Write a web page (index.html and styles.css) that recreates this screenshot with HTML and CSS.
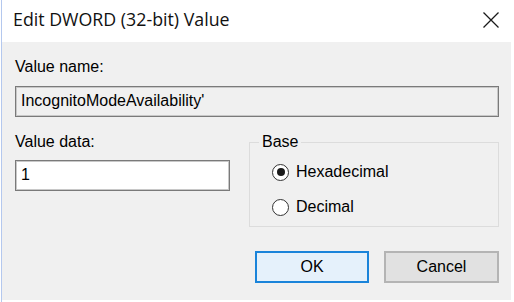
FILE: index.html
```html
<!DOCTYPE html>
<html lang="en">
<head>
  <meta charset="UTF-8"/>
  <title>Edit DWORD (32-bit) Value</title>
  <link rel="stylesheet" href="styles.css">
</head>
<body>
  <div class="window">

    <!-- Title bar -->
    <div class="titlebar">
      <span class="title">Edit DWORD (32-bit) Value</span>
      <svg class="close" width="18" height="18" viewBox="0 0 18 18" aria-label="Close">
        <path d="M1.5 1.5 L16.5 16.5 M16.5 1.5 L1.5 16.5" stroke="#1a1a1a" stroke-width="1.3" fill="none"/>
      </svg>
    </div>

    <div class="client">
      <div class="label">Value name:</div>
      <div class="field field-readonly">IncognitoModeAvailability'</div>

      <div class="row">
        <div class="col">
          <div class="label">Value data:</div>
          <div class="field field-data">1</div>
        </div>

        <!-- Base group box -->
        <fieldset class="group">
          <legend>Base</legend>
          <div class="radio"><span class="dot checked"></span>Hexadecimal</div>
          <div class="radio"><span class="dot"></span>Decimal</div>
        </fieldset>
      </div>

      <div class="buttons">
        <button class="btn btn-default">OK</button>
        <button class="btn">Cancel</button>
      </div>
    </div>
  </div>
</body>
</html>
```

FILE: styles.css
```css
* {
  box-sizing: border-box;
}
body {
  margin: 0;
  width: 514px;
  height: 302px;
  background: #fff;
  color: #000;
  font-family: "Liberation Sans", Arial, sans-serif;
  font-size: 16px;
  overflow: hidden;
}
.window {
  height: 302px;
  margin-left: 1px;
  border-left: 1px solid #b4c8ee;
  padding-right: 3px;
  padding-bottom: 2px;
  display: flex;
  flex-direction: column;
}
/* TITLE BAR */
.titlebar {
  height: 42px;
  flex: none;
  display: flex;
  align-items: center;
  justify-content: space-between;
  padding: 0 11px 4px 11px;
  background: #fff;
}
.title {
  font-family: "Open Sans", "Noto Sans", sans-serif;
  font-size: 17.8px;
  color: #111;
}
.close {
  display: block;
  margin-top: 2px;
}
/* DIALOG BODY */
.client {
  flex: 1;
  background: #f0f0f0;
  padding: 16px 12px 0 13px;
}
.label {
  line-height: 18px;
  height: 18px;
}
.field {
  height: 31px;
  margin-top: 10px;
  border: 1px solid #7a7a7a;
  box-shadow: inset 0 0 0 1px #c8c8c8;
  padding: 0 5px;
  line-height: 28px;
}
.field-readonly {
  background: #f0f0f0;
}
.field-data {
  background: #fff;
  margin-top: 9px;
  width: 215px;
}
.row {
  display: flex;
  gap: 19px;
  margin-top: 16px;
}
.col {
  flex: none;
}
/* GROUP BOX */
.group {
  flex: 1;
  height: 94px;
  margin: 0;
  border: 1px solid #dcdcdc;
  padding: 12px 0 0 22px;
  display: flex;
  flex-direction: column;
  gap: 17px;
}
.group legend {
  margin-left: -13px;
  padding: 0 3px;
  line-height: 18px;
}
.radio {
  display: flex;
  align-items: center;
  gap: 7px;
  line-height: 18px;
}
.dot {
  width: 17px;
  height: 17px;
  border: 1.5px solid #333;
  border-radius: 50%;
  background: #fff;
  display: flex;
  align-items: center;
  justify-content: center;
}
.dot.checked::after {
  content: "";
  width: 8px;
  height: 8px;
  border-radius: 50%;
  background: #1a1a1a;
}
/* BUTTONS */
.buttons {
  display: flex;
  justify-content: flex-end;
  gap: 15px;
  margin-top: 24px;
}
.btn {
  width: 115px;
  height: 32px;
  border: 2px solid #b4b4b4;
  background: #e1e1e1;
  font-family: inherit;
  font-size: 16px;
  color: #000;
  padding: 0;
}
.btn-default {
  width: 114px;
  border-color: #1a84da;
  background: #e5f1fb;
}
```
